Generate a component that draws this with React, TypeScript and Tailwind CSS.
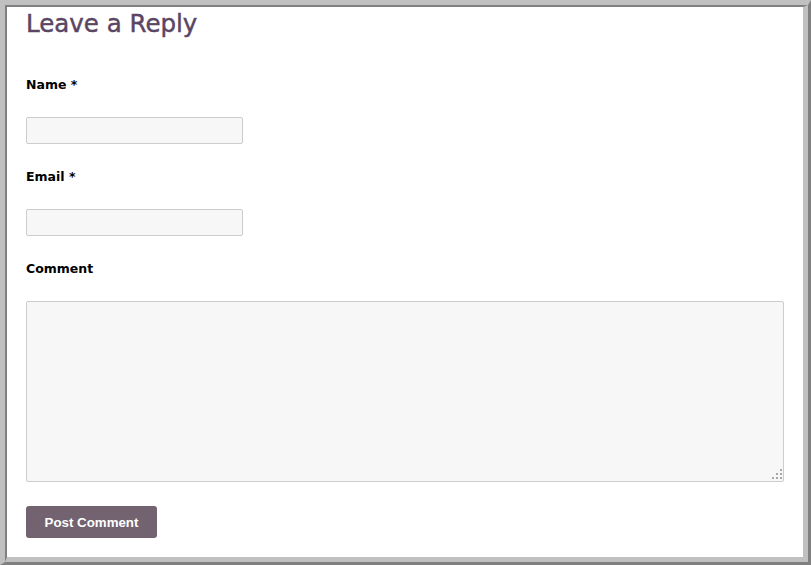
import React from "react";

export default function App() {
  const label = "block h-[20px] leading-[20px] text-[12.5px] font-bold text-black [font-family:'DejaVu_Sans',sans-serif]";
  const input = "block h-[27px] w-[217px] rounded-[2px] border border-[#cccccc] bg-[#f7f7f7] outline-none";
  return (
    <div className="h-[565px] w-[811px] overflow-hidden bg-white">
      <div className="h-full w-full border-t-[5px] border-l-[5px] border-b-[3px] border-r-[3px] border-t-[#c0c0c0] border-l-[#c0c0c0] border-b-[#808080] border-r-[#808080]">
        <div className="h-full w-full border-t-2 border-l-2 border-b-[5px] border-r-[5px] border-t-[#808080] border-l-[#808080] border-b-[#c0c0c0] border-r-[#c0c0c0] bg-white pl-[19px] pr-[19px] pt-[1px]">
          <h3 className="h-[30px] text-[24.5px] leading-[32px] text-[#5a4563] [-webkit-text-stroke:0.45px_#5a4563] [font-family:'DejaVu_Sans',sans-serif]">
            Leave a Reply
          </h3>
          <form className="flex flex-col" onSubmit={(e) => e.preventDefault()}>
            <label className={`${label} mt-[37px]`}>Name *</label>
            <input type="text" className={`${input} mt-[22px]`} />
            <label className={`${label} mt-[23px]`}>Email *</label>
            <input type="email" className={`${input} mt-[22px]`} />
            <label className={`${label} mt-[23px]`}>Comment</label>
            <div className="relative mt-[22px] h-[181px] w-[758px]">
              <textarea className="block h-full w-full resize-none rounded-[2px] border border-[#cccccc] bg-[#f7f7f7] outline-none" />
              <div className="pointer-events-none absolute bottom-[3px] right-[2px] flex flex-col items-end gap-[2px]">
                <div className="flex gap-[2px]">
                  <span className="h-[2px] w-[2px] bg-[#a8a8a8]" />
                </div>
                <div className="flex gap-[2px]">
                  <span className="h-[2px] w-[2px] bg-[#a8a8a8]" />
                  <span className="h-[2px] w-[2px] bg-[#a8a8a8]" />
                </div>
                <div className="flex gap-[2px]">
                  <span className="h-[2px] w-[2px] bg-[#a8a8a8]" />
                  <span className="h-[2px] w-[2px] bg-[#a8a8a8]" />
                  <span className="h-[2px] w-[2px] bg-[#a8a8a8]" />
                </div>
              </div>
            </div>
            <div className="mt-[24px]">
              <button
                type="submit"
                className="h-[32px] w-[131px] rounded-[3px] bg-[#736270] pt-[2px] text-[13.3px] font-bold text-white [font-family:'Liberation_Sans',Arial,sans-serif]"
              >
                Post Comment
              </button>
            </div>
          </form>
        </div>
      </div>
    </div>
  );
}
